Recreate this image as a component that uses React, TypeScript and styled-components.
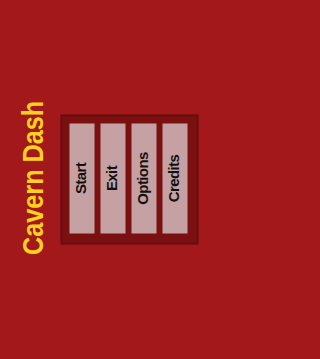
import styled, { createGlobalStyle } from 'styled-components';

const GlobalStyle = createGlobalStyle`
	html,
	body {
		margin: 0;
		padding: 0;
		background-color: #a3181b;
	}
`;

const Screen = styled.div`
	display: flex;
	justify-content: center;
	align-items: center;
	width: 202px;
	height: 359px;
	overflow: hidden;
	background-color: #a3181b;
	font-family: 'Liberation Sans', Arial, sans-serif;
`;

// the game is laid out in landscape and turned onto its side
const Stage = styled.div`
	flex: none;
	box-sizing: border-box;
	display: flex;
	flex-direction: column;
	align-items: center;
	width: 359px;
	height: 202px;
	padding-top: 18px;
	transform: rotate(-90deg);
`;

const Title = styled.h1`
	margin: 0;
	font-size: 29px;
	line-height: 29px;
	font-weight: 700;
	color: #fcd21e;
	white-space: nowrap;
	transform: scaleX(0.87);
	margin-left: 4px;
`;

const Menu = styled.div`
	box-sizing: border-box;
	display: flex;
	flex-direction: column;
	align-items: center;
	gap: 6px;
	width: 130px;
	height: 138px;
	margin-top: 13px;
	padding: 7px 0 0 3px;
	background-color: #7b1011;
	border: 2px solid #6c0c0e;
`;

const MenuButton = styled.button`
	box-sizing: border-box;
	width: 110px;
	height: 25px;
	padding: 0 0 4px;
	border: none;
	background-color: #c5a1a3;
	color: #111;
	font-family: inherit;
	font-size: 15px;
	font-weight: 700;
	letter-spacing: -0.6px;
	line-height: 21px;
	cursor: pointer;
`;

const items = ['Start', 'Exit', 'Options', 'Credits'];

export default function App() {
	return (
		<>
			<GlobalStyle />
			<Screen>
				<Stage>
					<Title>Cavern Dash</Title>
					<Menu>
						{items.map((label) => (
							<MenuButton key={label}>{label}</MenuButton>
						))}
					</Menu>
				</Stage>
			</Screen>
		</>
	);
}
